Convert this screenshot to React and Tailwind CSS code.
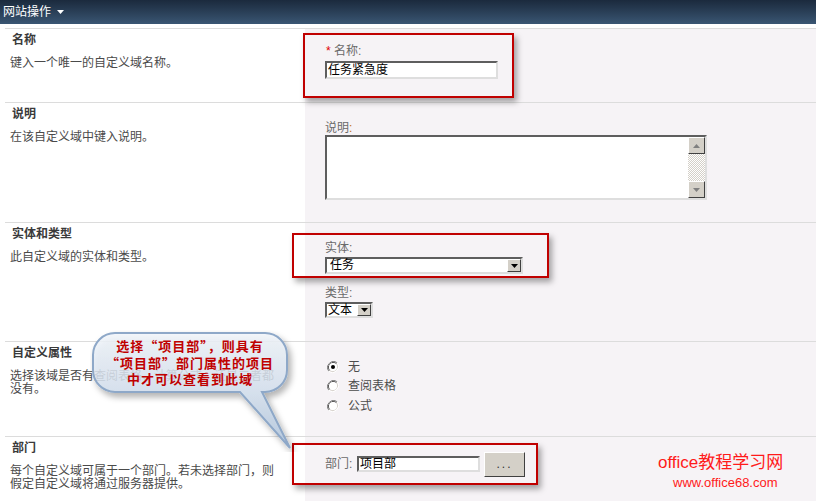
import React from "react";

function Section({ h, title, desc, children }) {
  return (
    <div className={`${h} ml-[5px] flex border-t border-[#dcdcdc]`}>
      <div className="w-[300px] shrink-0">
        <div className="pt-[3px] pl-[7px] font-bold text-[12px] leading-[17px] text-[#3a3a3a]">{title}</div>
        <div className="mt-[8px] pl-[5px] leading-[13px] whitespace-nowrap text-[#4a4a4a]">{desc}</div>
      </div>
      <div className="flex-1 bg-[#f6f3f6]">{children}</div>
    </div>
  );
}

function Inset({ className, children }) {
  return (
    <div
      className={`bg-white border-2 border-t-[#5e5e5e] border-l-[#5e5e5e] border-r-[#dedede] border-b-[#dedede] ${className}`}
    >
      {children}
    </div>
  );
}

function Arrow() {
  return (
    <svg width="7" height="4" viewBox="0 0 7 4">
      <path d="M0 0H7L3.5 4Z" fill="#000" />
    </svg>
  );
}

function DropBtn({ className }) {
  return (
    <div
      className={`w-[14px] bg-[#d4d0c8] border border-t-[#ffffff] border-l-[#ffffff] border-r-[#404040] border-b-[#404040] flex items-center justify-center ${className}`}
    >
      <Arrow />
    </div>
  );
}

function Radio({ checked }) {
  return (
    <svg width="12" height="12" viewBox="0 0 12 12">
      <path d="M10.2 1.8A6 6 0 0 0 1.8 10.2" stroke="#808080" strokeWidth="1" fill="none" />
      <path d="M9.5 2.5A5 5 0 0 0 2.5 9.5" stroke="#404040" strokeWidth="1" fill="none" />
      <path d="M1.8 10.2A6 6 0 0 0 10.2 1.8" stroke="#ffffff" strokeWidth="1" fill="none" />
      <path d="M2.5 9.5A5 5 0 0 0 9.5 2.5" stroke="#d4d0c8" strokeWidth="1" fill="none" />
      <circle cx="6" cy="6" r="4" fill="#fff" />
      {checked && <circle cx="6" cy="6" r="2" fill="#000" />}
    </svg>
  );
}

export default function App() {
  return (
    <div className="relative w-[816px] h-[501px] overflow-hidden bg-white font-['Liberation_Sans','Noto_Sans_CJK_SC',sans-serif] text-[12px] text-[#4c4c4c]">
      <div className="h-[24px] bg-gradient-to-b from-[#1b2a3d] to-[#3a5673] flex items-center pl-[3px] text-white text-[12px]">
        <span>网站操作</span>
        <svg width="7" height="4" className="ml-[6px]" viewBox="0 0 7 4">
          <path d="M0 0H7L3.5 4Z" fill="#fff" />
        </svg>
      </div>
      <div className="h-[4px]" />

      <Section h="h-[74px]" title="名称" desc="键入一个唯一的自定义域名称。">
        <div className="pt-[4px]">
          <div className="relative ml-[-2px] w-[211px] h-[65px] border-2 border-[#c00000] shadow-[3px_4px_6px_rgba(0,0,0,0.35)]">
            <div className="pl-[21px] pt-[9px] leading-[14px] text-[#6a6a6a]">
              <span className="text-[#e00000]">*</span> 名称:
            </div>
            <Inset className="ml-[20px] mt-[3px] w-[173px] h-[18px] leading-[14px] pl-[1px] text-black">任务紧急度</Inset>
          </div>
        </div>
      </Section>

      <Section h="h-[120px]" title="说明" desc="在该自定义域中键入说明。">
        <div className="pt-[18px] pl-[20px]">
          <div className="leading-[14px] text-[#6a6a6a]">
            说明<span className="text-[#c07020]">:</span>
          </div>
          <Inset className="w-[382px] h-[65px] flex justify-end">
            <div className="w-[17px] flex flex-col">
              <div className="h-[17px] bg-[#d4d0c8] border border-t-[#ffffff] border-l-[#ffffff] border-r-[#404040] border-b-[#404040] flex items-center justify-center">
                <svg width="7" height="4" viewBox="0 0 7 4"><path d="M3.5 0L7 4H0Z" fill="#808080" /></svg>
              </div>
              <div className="flex-1 bg-[repeating-conic-gradient(#d4d0c8_0_25%,#ffffff_0_50%)] bg-[length:2px_2px]" />
              <div className="h-[17px] bg-[#d4d0c8] border border-t-[#ffffff] border-l-[#ffffff] border-r-[#404040] border-b-[#404040] flex items-center justify-center">
                <svg width="7" height="4" viewBox="0 0 7 4"><path d="M0 0H7L3.5 4Z" fill="#808080" /></svg>
              </div>
            </div>
          </Inset>
        </div>
      </Section>

      <Section h="h-[119px]" title="实体和类型" desc="此自定义域的实体和类型。">
        <div className="pt-[10px]">
          <div className="relative ml-[-13px] w-[257px] h-[45px] border-2 border-[#c00000] shadow-[3px_4px_6px_rgba(0,0,0,0.35)]">
            <div className="pl-[31px] pt-[6px] leading-[14px] text-[#6a6a6a]">实体:</div>
            <Inset className="ml-[31px] mt-[2px] w-[198px] h-[17px] flex items-stretch justify-between text-black">
              <span className="pl-[3px] leading-[13px]">任务</span>
              <DropBtn />
            </Inset>
          </div>
          <div className="pl-[20px] mt-[8px] leading-[14px] text-[#6a6a6a]">类型:</div>
          <Inset className="ml-[20px] mt-[2px] w-[48px] h-[16px] flex items-stretch justify-between text-black">
            <span className="pl-[1px] leading-[12px]">文本</span>
            <DropBtn />
          </Inset>
        </div>
      </Section>

      <Section
        h="h-[95px]"
        title="自定义属性"
        desc={
          <>
            选择该域是否有查阅表格、计算公式、还是二者都
            <br />
            没有。
          </>
        }
      >
        <div className="pt-[15px] pl-[22px] text-[#4c4c4c]">
          <div className="h-[19.5px] flex items-center gap-[9px]"><Radio checked />无</div>
          <div className="h-[19.5px] flex items-center gap-[9px]"><Radio />查阅表格</div>
          <div className="h-[19.5px] flex items-center gap-[9px]"><Radio />公式</div>
        </div>
      </Section>

      <Section
        h="h-[65px]"
        title="部门"
        desc={
          <>
            每个自定义域可属于一个部门。若未选择部门，则
            <br />
            假定自定义域将通过服务器提供。
          </>
        }
      >
        <div className="pt-[6px]">
          <div className="relative ml-[-13px] w-[246px] h-[42px] border-2 border-[#c00000] shadow-[3px_4px_6px_rgba(0,0,0,0.35)] flex items-center pl-[31px]">
            <span className="text-[#6a6a6a] leading-[14px] w-[32px]">部门:</span>
            <Inset className="w-[123px] h-[16px] leading-[12px] pl-[1px] text-black">项目部</Inset>
            <div className="ml-[4px] w-[41px] h-[25px] bg-[#d4d0c8] border border-t-[#ffffff] border-l-[#ffffff] border-r-[#404040] border-b-[#404040] flex items-center justify-center text-[#333] tracking-[2px] leading-[12px]">
              ...
            </div>
          </div>
        </div>
      </Section>

      {/* callout bubble */}
      <div className="absolute left-[90px] top-[330px] w-[210px] h-[122px]">
        <svg width="210" height="122" viewBox="0 0 210 122" className="absolute left-0 top-0">
          <defs>
            <linearGradient id="bg" x1="0" y1="0" x2="0" y2="1">
              <stop offset="0" stopColor="#f2f6fb" />
              <stop offset="0.5" stopColor="#d6e2f0" />
              <stop offset="1" stopColor="#aec4dd" />
            </linearGradient>
            <filter id="sh" x="-10%" y="-10%" width="130%" height="130%">
              <feDropShadow dx="3" dy="4" stdDeviation="3" floodColor="#000" floodOpacity="0.35" />
            </filter>
          </defs>
          <path
            d="M25 3H175A22 22 0 0 1 197 25V40A22 22 0 0 1 175 62H172L200 118L150 62H25A22 22 0 0 1 3 40V25A22 22 0 0 1 25 3Z"
            fill="url(#bg)"
            fillOpacity="0.82"
            stroke="#8ea8c8"
            strokeWidth="2"
            filter="url(#sh)"
          />
        </svg>
        <div className="absolute left-[3px] top-[8px] w-[194px] text-center text-[#c00000] font-bold text-[13px] tracking-[1px] leading-[16.5px] whitespace-nowrap font-['Noto_Sans_CJK_SC',sans-serif]">
          选择“项目部”，则具有
          <br />
          “项目部”部门属性的项目
          <br />
          中才可以查看到此域
        </div>
      </div>

      {/* watermark */}
      <div className="absolute left-[658px] top-[453px] text-[#ff1a1a] font-['Liberation_Sans','Noto_Sans_CJK_SC',sans-serif]">
        <div className="text-[17px] leading-[20px] whitespace-nowrap">office教程学习网</div>
        <div className="ml-[15px] mt-[2px] text-[13px] leading-[16px]">www.office68.com</div>
      </div>
    </div>
  );
}
